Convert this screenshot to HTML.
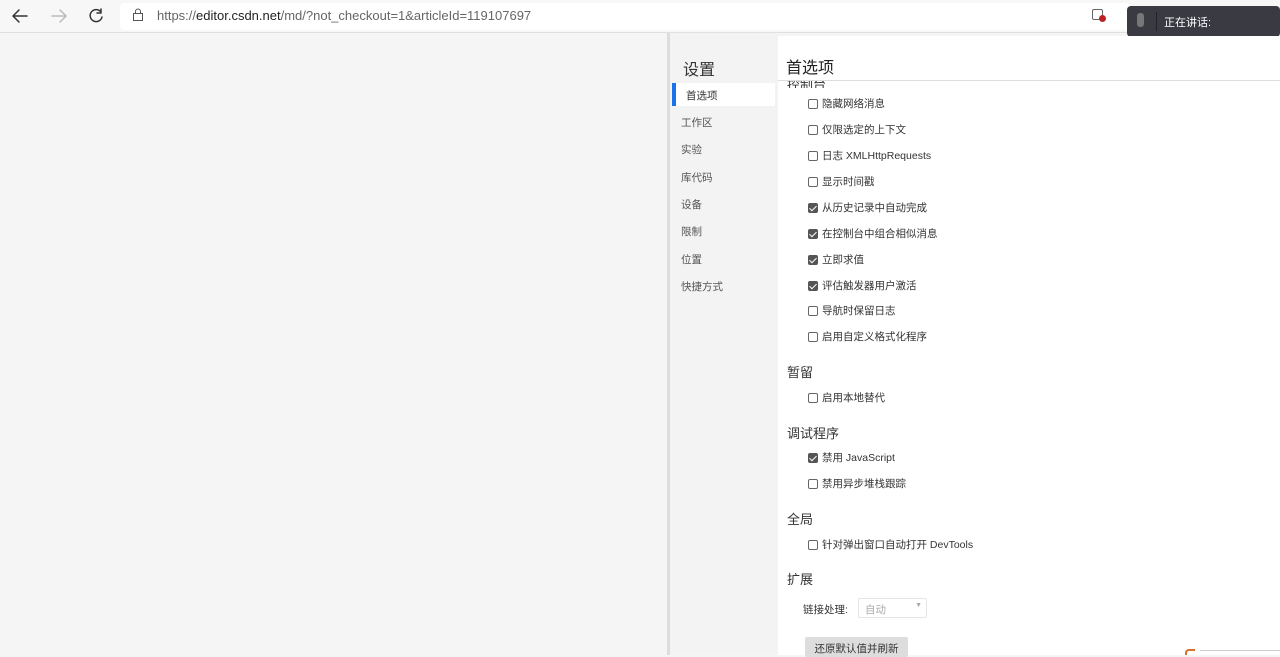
<!DOCTYPE html><html><head><meta charset="utf-8"><style>
*{margin:0;padding:0;box-sizing:border-box}
body{width:1280px;height:655px;overflow:hidden;background:#f5f5f5;font-family:"Liberation Sans","Noto Sans CJK SC",sans-serif;position:relative;color:#333}
.a{position:absolute}
.cb{position:absolute;left:808px;width:10px;height:10px;border:1px solid #666;border-radius:2px;background:#fff}
.cb.on{background:#555;border-color:#555}
.cb.on::after{content:"";position:absolute;left:2px;top:0px;width:3px;height:6px;border:solid #fff;border-width:0 1.5px 1.5px 0;transform:rotate(45deg)}
.t{position:absolute;left:822px;font-size:10.5px;color:#333;line-height:12px}
.h{position:absolute;left:787px;font-size:13px;color:#333}
.nav{position:absolute;left:681px;font-size:10.5px;color:#555}
</style></head><body>
<div class="a" style="left:0;top:0;width:1280px;height:33px;background:#f7f7f7;border-bottom:1px solid #e0e0e0"></div>
<svg class="a" style="left:10px;top:7px" width="100" height="18" viewBox="0 0 100 18" fill="none" stroke-width="1.5" stroke-linecap="round" stroke-linejoin="round">
<path d="M17 9H3M9 3L3 9l6 6" stroke="#333"/>
<path d="M56 9H42M50 3l6 6-6 6" stroke="#bbb"/>
<path d="M91 5a6 6 0 1 0 1 5M91 2v4h-4" stroke="#333"/>
</svg>
<div class="a" style="left:120px;top:3px;width:1010px;height:27px;background:#fff;border-radius:4px"></div>
<svg class="a" style="left:132px;top:8px" width="12" height="14"><rect x="1.5" y="5.5" width="9" height="7" fill="none" stroke="#555"/><path d="M3.5 5.5V3.5a2.5 2.5 0 0 1 5 0v2" fill="none" stroke="#555"/></svg>
<div class="a" style="left:157px;top:8px;font-size:13px;color:#666">https://<span style="color:#222">editor.csdn.net</span>/md/?not_checkout=1&amp;articleId=119107697</div>
<div class="a" style="left:1092px;top:9px;width:11px;height:11px;border:1.5px solid #666;border-radius:2px"></div>
<div class="a" style="left:1099px;top:15px;width:7px;height:7px;border-radius:50%;background:#b22"></div>
<div class="a" style="left:1127px;top:6px;width:153px;height:31px;background:#3a3b42;border-radius:4px"></div>
<div class="a" style="left:1156px;top:12px;width:1px;height:19px;background:#222"></div>
<div class="a" style="left:1137px;top:13px;width:7px;height:14px;background:#777;border-radius:3px"></div>
<div class="a" style="left:1164px;top:14px;font-size:11px;color:#fff">正在讲话:</div>
<div class="a" style="left:667px;top:33px;width:3px;height:622px;background:#ddd"></div>
<div class="a" style="left:670px;top:33px;width:108px;height:622px;background:#f3f3f3"></div>
<div class="a" style="left:778px;top:36px;width:502px;height:619px;background:#fff"></div>
<div class="a" style="left:683px;top:56px;font-size:16px;color:#333">设置</div>
<div class="a" style="left:672px;top:83px;width:103px;height:23px;background:#fff"></div>
<div class="a" style="left:672px;top:83px;width:4px;height:23px;background:#1a73e8"></div>
<div class="nav" style="left:686px;top:88px;color:#333">首选项</div>
<div class="nav" style="top:115px">工作区</div>
<div class="nav" style="top:142px">实验</div>
<div class="nav" style="top:170px">库代码</div>
<div class="nav" style="top:197px">设备</div>
<div class="nav" style="top:224px">限制</div>
<div class="nav" style="top:252px">位置</div>
<div class="nav" style="top:279px">快捷方式</div>
<div class="a" style="left:786px;top:54px;font-size:16px;color:#222">首选项</div>
<div class="a" style="left:778px;top:80px;width:502px;height:1px;background:#ddd"></div>
<div class="a" style="left:786px;top:81px;width:60px;height:7px;overflow:hidden"><div class="a" style="left:1px;top:-7px;font-size:13px;color:#333">控制台</div></div>
<div class="cb" style="top:99px"></div><div class="t" style="top:98px">隐藏网络消息</div>
<div class="cb" style="top:125px"></div><div class="t" style="top:124px">仅限选定的上下文</div>
<div class="cb" style="top:151px"></div><div class="t" style="top:150px">日志 XMLHttpRequests</div>
<div class="cb" style="top:177px"></div><div class="t" style="top:176px">显示时间戳</div>
<div class="cb on" style="top:203px"></div><div class="t" style="top:202px">从历史记录中自动完成</div>
<div class="cb on" style="top:229px"></div><div class="t" style="top:228px">在控制台中组合相似消息</div>
<div class="cb on" style="top:255px"></div><div class="t" style="top:254px">立即求值</div>
<div class="cb on" style="top:281px"></div><div class="t" style="top:280px">评估触发器用户激活</div>
<div class="cb" style="top:306px"></div><div class="t" style="top:305px">导航时保留日志</div>
<div class="cb" style="top:332px"></div><div class="t" style="top:331px">启用自定义格式化程序</div>
<div class="h" style="top:362px">暂留</div>
<div class="cb" style="top:393px"></div><div class="t" style="top:392px">启用本地替代</div>
<div class="h" style="top:423px">调试程序</div>
<div class="cb on" style="top:453px"></div><div class="t" style="top:452px">禁用 JavaScript</div>
<div class="cb" style="top:479px"></div><div class="t" style="top:478px">禁用异步堆栈跟踪</div>
<div class="h" style="top:509px">全局</div>
<div class="cb" style="top:540px"></div><div class="t" style="top:539px">针对弹出窗口自动打开 DevTools</div>
<div class="h" style="top:569px">扩展</div>
<div class="a" style="left:803px;top:602px;font-size:10.5px;color:#333">链接处理:</div>
<div class="a" style="left:858px;top:598px;width:69px;height:20px;border:1px solid #e5e5e5;border-radius:2px;font-size:10.5px;color:#aaa;padding:3px 6px">自动<span style="position:absolute;right:4px;top:3px;font-size:7px">▼</span></div>
<div class="a" style="left:805px;top:637px;width:103px;height:20px;background:#ddd;border-radius:2px;font-size:10.5px;color:#333;text-align:center;padding-top:4px">还原默认值并刷新</div>
<div class="a" style="left:1185px;top:649px;width:10px;height:6px;border-top:2px solid #d87030;border-left:2px solid #d87030;border-radius:4px 0 0 0"></div>
<div class="a" style="left:1200px;top:650px;width:80px;height:1px;background:#ccc"></div>
</body></html>
